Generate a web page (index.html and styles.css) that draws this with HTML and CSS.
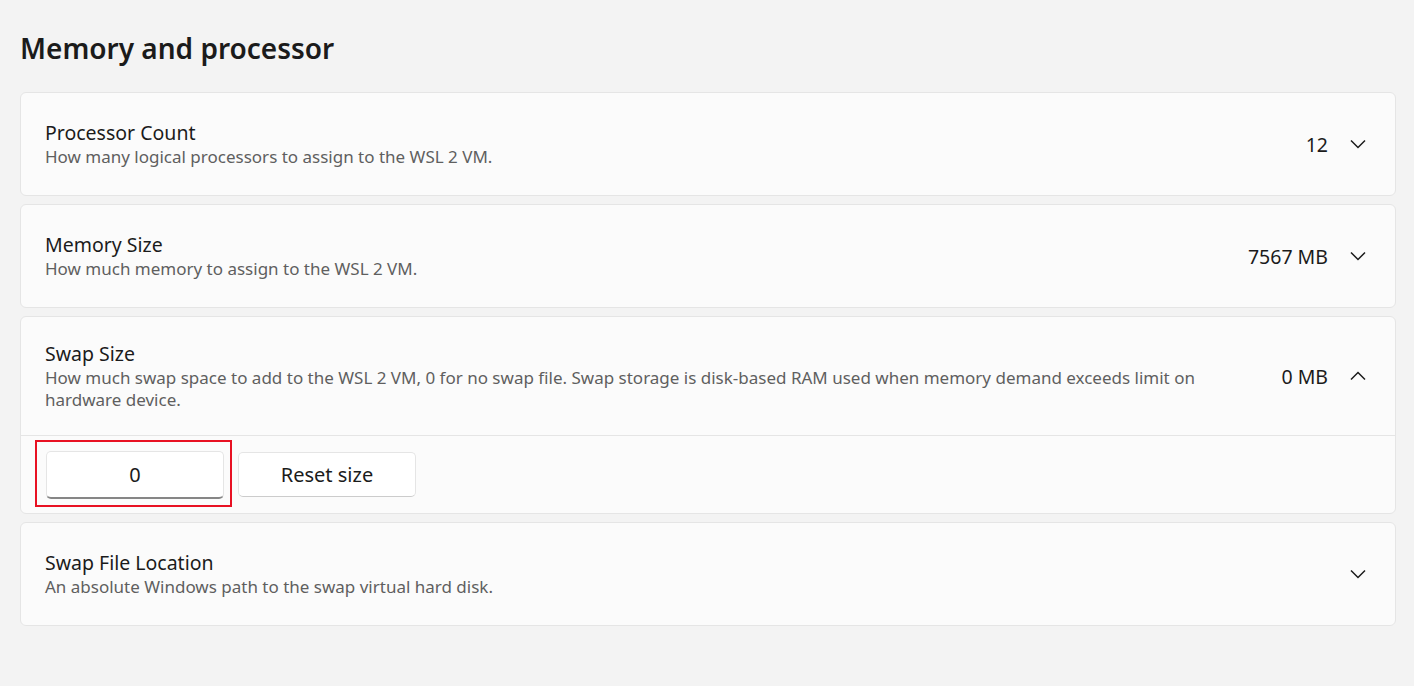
FILE: index.html
```html
<!DOCTYPE html>
<html>
<head>
<meta charset="utf-8">
<link rel="stylesheet" href="styles.css">
</head>
<body>
<main class="page">
  <h1 class="heading">Memory and processor</h1>
  <div class="cards">
    <section class="card">
      <div class="row">
        <div class="text">
          <div class="name">Processor Count</div>
          <div class="desc">How many logical processors to assign to the WSL 2 VM.</div>
        </div>
        <div class="value">12</div>
        <svg class="chev" viewBox="0 0 16 16"><path d="M1 4.5 L8 11.5 L15 4.5"/></svg>
      </div>
    </section>
    <section class="card">
      <div class="row">
        <div class="text">
          <div class="name">Memory Size</div>
          <div class="desc">How much memory to assign to the WSL 2 VM.</div>
        </div>
        <div class="value">7567 MB</div>
        <svg class="chev" viewBox="0 0 16 16"><path d="M1 4.5 L8 11.5 L15 4.5"/></svg>
      </div>
    </section>
    <section class="card">
      <div class="row row-open">
        <div class="text">
          <div class="name">Swap Size</div>
          <div class="desc">How much swap space to add to the WSL 2 VM, 0 for no swap file. Swap storage is disk-based RAM used when memory demand exceeds limit on hardware device.</div>
        </div>
        <div class="value">0 MB</div>
        <svg class="chev" viewBox="0 0 16 16"><path d="M1 11.5 L8 4.5 L15 11.5"/></svg>
      </div>
      <div class="panel">
        <div class="field">
          <input class="num" type="text" value="0">
          <div class="focus"></div>
        </div>
        <button class="btn">Reset size</button>
      </div>
    </section>
    <section class="card">
      <div class="row">
        <div class="text">
          <div class="name">Swap File Location</div>
          <div class="desc">An absolute Windows path to the swap virtual hard disk.</div>
        </div>
        <svg class="chev" viewBox="0 0 16 16"><path d="M1 4.5 L8 11.5 L15 4.5"/></svg>
      </div>
    </section>
  </div>
</main>
</body>
</html>
```

FILE: styles.css
```css
html, body {
  margin: 0;
  padding: 0;
  background: #f3f3f3;
  font-family: "Noto Sans", "Open Sans", sans-serif;
  color: #1b1b1b;
}
.page {
  padding: 26px 18px 0 20px;
}
.heading {
  margin: 0 0 22px 0;
  font-size: 28px;
  line-height: 44px;
  font-weight: 600;
  color: #1b1b1b;
}
.cards {
  display: flex;
  flex-direction: column;
  gap: 8px;
}
.card {
  background: #fbfbfb;
  border: 1px solid #e5e5e5;
  border-radius: 6px;
}
.row {
  display: flex;
  align-items: center;
  padding: 24px 29px 24px 24px;
  min-height: 54px;
}
.row-open {
  border-bottom: 1px solid #e5e5e5;
}
.text {
  flex: 1;
  padding-right: 60px;
}
.name {
  font-size: 19.5px;
  line-height: 26px;
}
.desc {
  font-size: 17px;
  line-height: 22px;
  color: #5f5f5f;
}
.value {
  font-size: 19.5px;
  margin-right: 22px;
}
.chev {
  width: 16px;
  height: 16px;
  fill: none;
  stroke: #1b1b1b;
  stroke-width: 1.5;
}
.panel {
  display: flex;
  align-items: flex-start;
  gap: 14px;
  padding: 15px 24px 14px 25px;
}
.field {
  position: relative;
}
.num {
  display: block;
  box-sizing: border-box;
  width: 178px;
  height: 48px;
  border: 1px solid #e5e5e5;
  border-bottom: 2px solid #868686;
  border-radius: 5px;
  background: #ffffff;
  text-align: center;
  font-family: inherit;
  font-size: 20px;
  color: #1b1b1b;
  outline: none;
}
.focus {
  position: absolute;
  left: -11px;
  top: -11px;
  width: 193px;
  height: 63px;
  border: 2px solid #e81123;
  pointer-events: none;
}
.btn {
  box-sizing: border-box;
  width: 178px;
  height: 45px;
  margin-top: 1px;
  border: 1px solid #e5e5e5;
  border-bottom-color: #cccccc;
  border-radius: 5px;
  background: #ffffff;
  font-family: inherit;
  font-size: 20px;
  color: #1b1b1b;
}
```
